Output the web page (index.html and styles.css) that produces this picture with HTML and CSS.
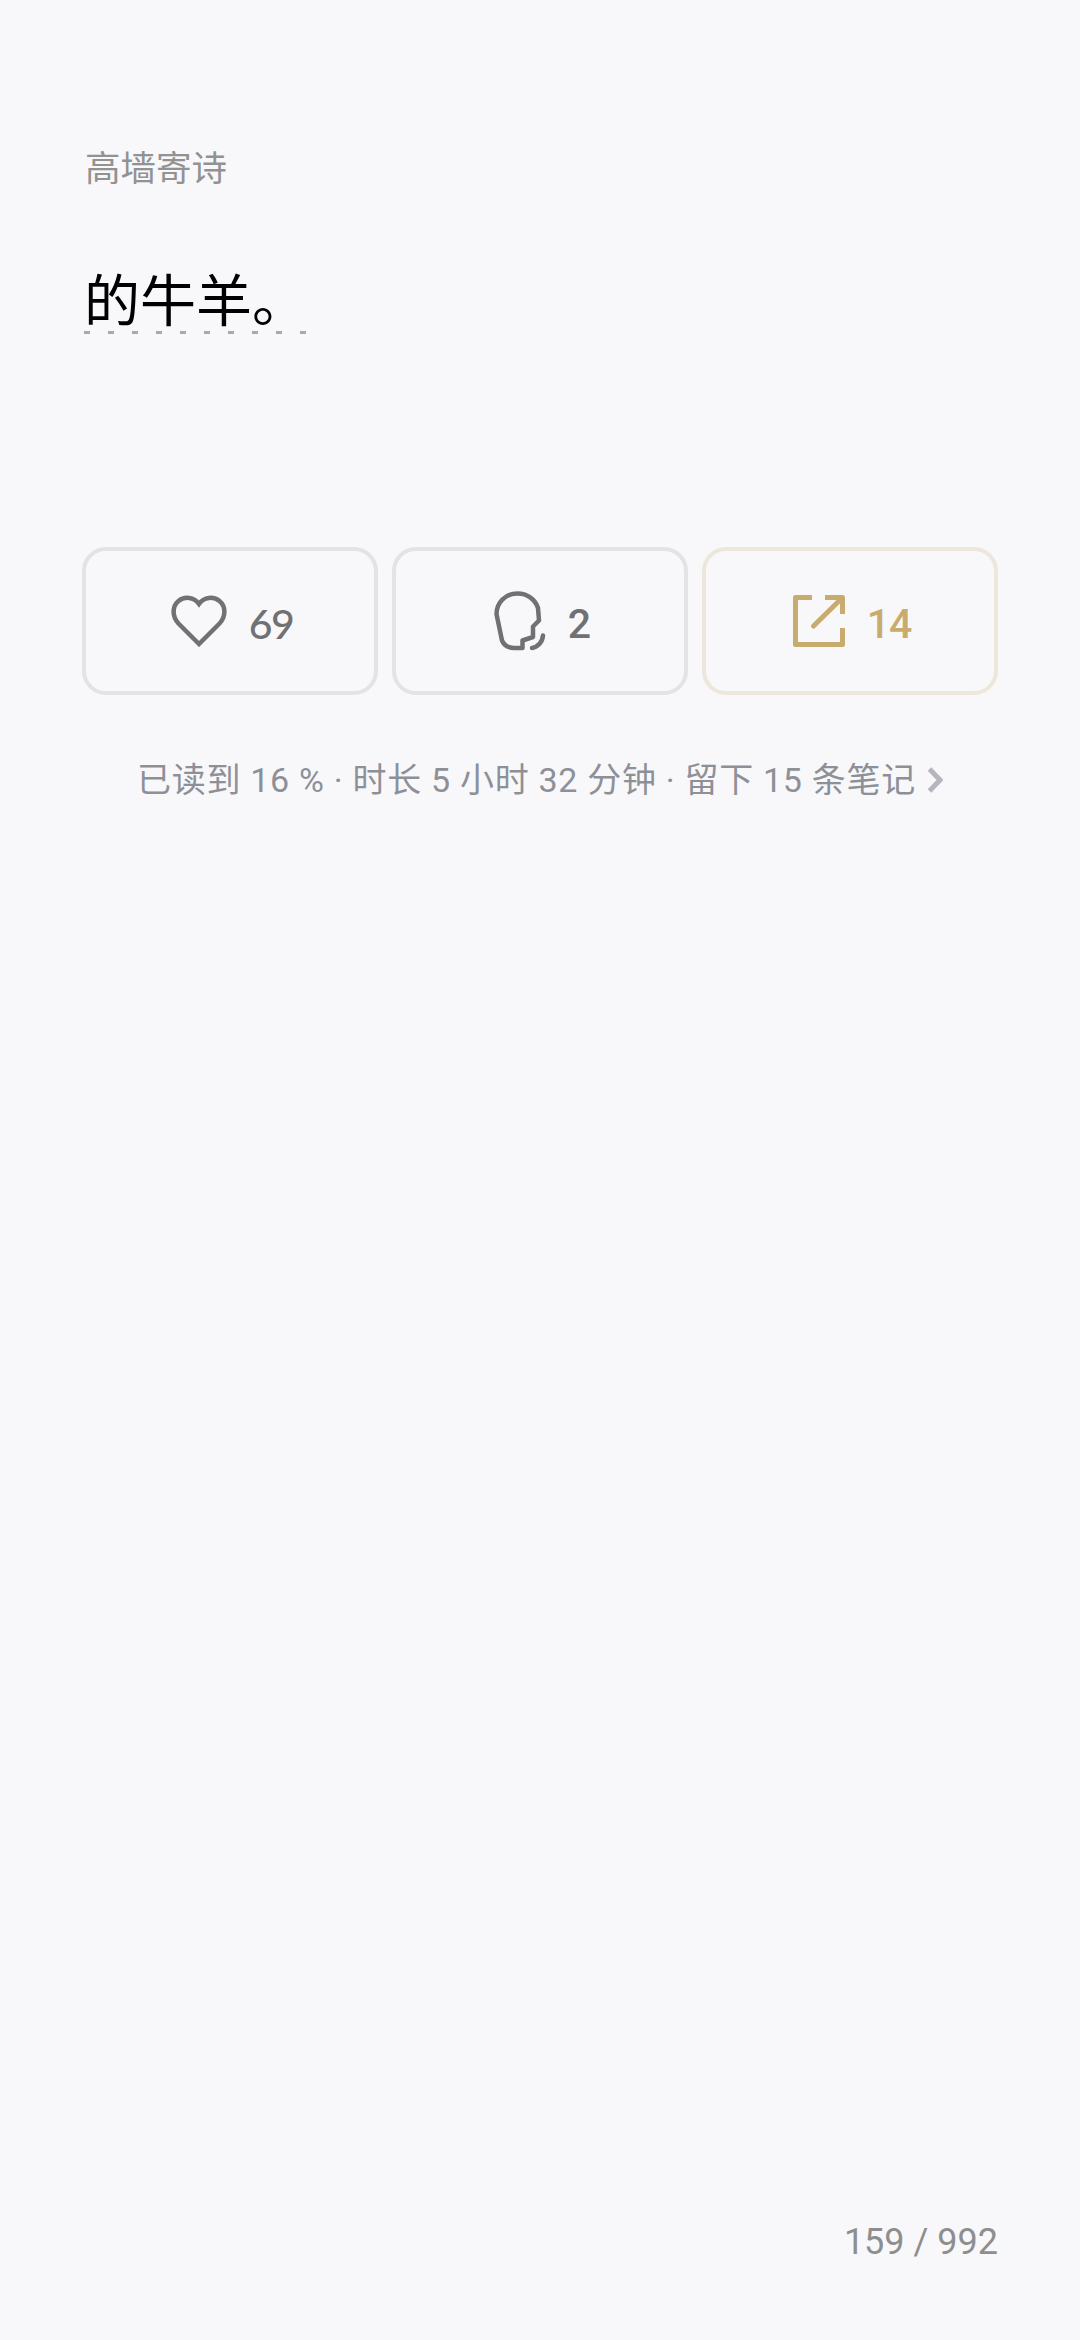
FILE: index.html
```html
<!DOCTYPE html>
<html lang="zh-CN">
<head>
    <meta charset="UTF-8">
    <meta name="viewport" content="width=device-width, initial-scale=1.0">
    <title>高墙寄诗</title>
    <link rel="stylesheet" href="styles.css">
</head>
<body>
    <div class="page">
        <!-- Chapter and quote -->
        <div class="chapter">高墙寄诗</div>
        <div class="quote"><span class="quote-text">的牛羊。</span></div>

        <!-- Actions -->
        <div class="actions">
            <div class="action">
                <svg class="icon icon-heart" viewBox="0 0 56 52" fill="none" stroke="currentColor" stroke-width="4.5" stroke-linejoin="miter">
                    <path d="M28 49 L7.5 28.5 C0.5 21 1.5 11 7.5 6 C13.5 1 23 2 28 9 C33 2 42.5 1 48.5 6 C54.5 11 55.5 21 48.5 28.5 Z"/>
                </svg>
                <span class="count count-round">69</span>
            </div>
            <div class="action">
                <svg class="icon icon-head" viewBox="0 0 52 60" fill="none" stroke="currentColor" stroke-width="4.5" stroke-linecap="round" stroke-linejoin="round">
                    <path d="M28.5 57 L28.5 49.5 L39 46 L39 35.5 L45 29.5 L44 17 C41 8 33 2.5 23.5 2.5 C11 2.5 2.5 12 2.5 23 L8 49.5 C10 54 14 57 20 57 Z"/>
                    <path d="M38 57 C44 56 48.5 51 49 44.5"/>
                </svg>
                <span class="count">2</span>
            </div>
            <div class="action action-gold">
                <svg class="icon icon-share" viewBox="0 0 52 52" fill="none" stroke="currentColor" stroke-width="5" stroke-linejoin="round">
                    <path d="M19 2.5 H2.5 V49.5 H49.5 V33"/>
                    <path d="M32 2.5 H49.5 V19"/>
                    <path d="M20.5 31 L48 4" stroke-linecap="round"/>
                </svg>
                <span class="count">14</span>
            </div>
        </div>

        <!-- Reading stats -->
        <div class="stats">
            <span>已读到 16 % · 时长 5 小时 32 分钟 · 留下 15 条笔记</span>
            <svg class="chevron" viewBox="0 0 16 26" fill="none" stroke="currentColor" stroke-width="5">
                <path d="M2.5 2 L13 13 L2.5 24"/>
            </svg>
        </div>

        <div class="page-num">159 / 992</div>
    </div>
</body>
</html>
```
FILE: styles.css
```css
html, body {
    margin: 0;
    padding: 0;
}
body {
    background-color: #f8f8fb;
    font-family: Roboto, "Noto Sans CJK SC", sans-serif;
}
.page {
    box-sizing: border-box;
    width: 1080px;
    height: 2340px;
    padding: 147px 82px 76px;
    display: flex;
    flex-direction: column;
}
.chapter {
    margin-left: 3px;
    font-size: 35.5px;
    line-height: 44px;
    color: #929292;
}
.quote {
    margin-top: 70px;
    font-family: "Noto Sans CJK SC", sans-serif;
    font-size: 56px;
    line-height: 72px;
    color: #000;
}
.quote-text {
    display: inline-block;
    margin-left: 2px;
    padding-bottom: 1px;
    background: repeating-linear-gradient(to right, #a9a9a9 0, #a9a9a9 6px, transparent 6px, transparent 24px) left bottom / 100% 3px no-repeat;
}
.actions {
    margin-top: 213px;
    display: flex;
    gap: 14px;
}
.action {
    box-sizing: border-box;
    flex: 0 0 296px;
    height: 148px;
    padding-left: 4px;
    border: 4px solid #e3e3e5;
    border-radius: 24px;
    display: flex;
    align-items: center;
    justify-content: center;
    gap: 22px;
    color: #707173;
}
.action-gold {
    border-color: #ece7da;
    color: #c8ab6e;
}
.icon-heart {
    width: 56px;
    height: 52px;
}
.icon-head {
    width: 52px;
    height: 60px;
}
.icon-share {
    width: 52px;
    height: 52px;
}
.count {
    font-size: 41px;
    font-weight: 500;
    letter-spacing: -1px;
    line-height: 48px;
    padding-top: 6px;
}
.count-round {
    font-family: Lato, Roboto, sans-serif;
    letter-spacing: -1.5px;
}
.stats {
    margin-top: 63px;
    display: flex;
    align-items: center;
    justify-content: center;
    gap: 11px;
    font-size: 34px;
    letter-spacing: 0.7px;
    line-height: 44px;
    color: #8d9097;
}
.chevron {
    width: 16px;
    height: 26px;
    color: #b5b6be;
}
.page-num {
    margin-top: auto;
    text-align: right;
    font-size: 36px;
    line-height: 44px;
    color: #8e8e8e;
}
```
